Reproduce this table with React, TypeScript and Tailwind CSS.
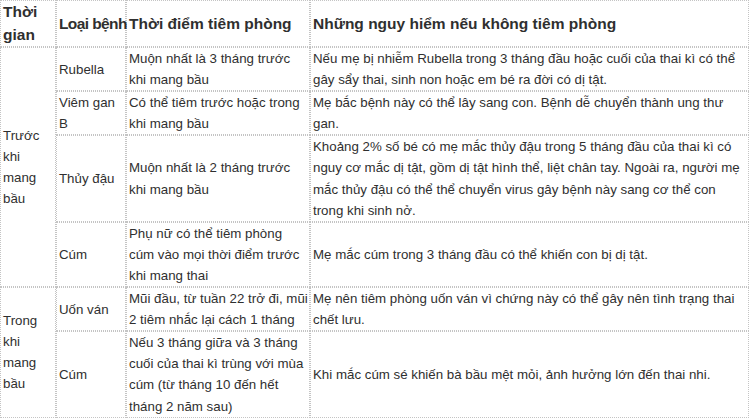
type Row = { time?: { label: string[]; span: number }; disease: string[]; when: string[]; risk: string[] };

// line breaks follow the original article table
const rows: Row[] = [
  {
    time: { label: ["Trước", "khi", "mang", "bầu"], span: 4 },
    disease: ["Rubella"],
    when: ["Muộn nhất là 3 tháng trước", "khi mang bầu"],
    risk: [
      "Nếu mẹ bị nhiễm Rubella trong 3 tháng đầu hoặc cuối của thai kì có thể",
      "gây sẩy thai, sinh non hoặc em bé ra đời có dị tật.",
    ],
  },
  {
    disease: ["Viêm gan", "B"],
    when: ["Có thể tiêm trước hoặc trong", "khi mang bầu"],
    risk: ["Mẹ bắc bệnh này có thể lây sang con. Bệnh dễ chuyển thành ung thư", "gan."],
  },
  {
    disease: ["Thủy đậu"],
    when: ["Muộn nhất là 2 tháng trước", "khi mang bầu"],
    risk: [
      "Khoảng 2% số bé có mẹ mắc thủy đậu trong 5 tháng đầu của thai kì có",
      "nguy cơ mắc dị tật, gồm dị tật hình thể, liệt chân tay. Ngoài ra, người mẹ",
      "mắc thủy đậu có thể thể chuyển virus gây bệnh này sang cơ thể con",
      "trong khi sinh nở.",
    ],
  },
  {
    disease: ["Cúm"],
    when: ["Phụ nữ có thể tiêm phòng", "cúm vào mọi thời điểm trước", "khi mang thai"],
    risk: ["Mẹ mắc cúm trong 3 tháng đầu có thể khiến con bị dị tật."],
  },
  {
    time: { label: ["Trong", "khi", "mang", "bầu"], span: 2 },
    disease: ["Uốn ván"],
    when: ["Mũi đầu, từ tuần 22 trở đi, mũi", "2 tiêm nhắc lại cách 1 tháng"],
    risk: ["Mẹ nên tiêm phòng uốn ván vì chứng này có thể gây nên tình trạng thai", "chết lưu."],
  },
  {
    disease: ["Cúm"],
    when: ["Nếu 3 tháng giữa và 3 tháng", "cuối của thai kì trùng với mùa", "cúm (từ tháng 10 đến hết", "tháng 2 năm sau)"],
    risk: ["Khi mắc cúm sé khiến bà bầu mệt mỏi, ảnh hưởng lớn đến thai nhi."],
  },
];

const cell = "border border-dotted border-[#c4c4c4] px-[2px] py-0 align-middle text-left";

function Lines({ lines }: { lines: string[] }) {
  return (
    <>
      {lines.map((l, i) => (
        <span key={i} className="block whitespace-nowrap">
          {l}
        </span>
      ))}
    </>
  );
}

export default function App() {
  return (
    <div className="w-[750px] h-[419px] overflow-hidden bg-white">
      <table
        className="w-[749px] table-fixed border-separate border-spacing-0 text-[13.3px] leading-[21.1px] text-[#2f2f2f]"
        style={{ fontFamily: '"Liberation Sans", Arial, sans-serif' }}
      >
        <colgroup>
          <col className="w-[56px]" />
          <col className="w-[70px]" />
          <col className="w-[184px]" />
          <col />
        </colgroup>
        <thead>
          <tr>
            <th className={`${cell} text-[15.5px] leading-[22.5px] font-bold`}>
              <Lines lines={["Thời", "gian"]} />
            </th>
            <th className={`${cell} text-[15.5px] font-bold whitespace-nowrap tracking-[-0.6px]`}>Loại bệnh</th>
            <th className={`${cell} text-[15.5px] font-bold`}>Thời điểm tiêm phòng</th>
            <th className={`${cell} text-[15.5px] font-bold`}>Những nguy hiểm nếu không tiêm phòng</th>
          </tr>
        </thead>
        <tbody>
          {rows.map((r, i) => (
            <tr key={i}>
              {r.time && (
                <td rowSpan={r.time.span} className={cell}>
                  <Lines lines={r.time.label} />
                </td>
              )}
              <td className={cell}>
                <Lines lines={r.disease} />
              </td>
              <td className={cell}>
                <Lines lines={r.when} />
              </td>
              <td className={cell}>
                <Lines lines={r.risk} />
              </td>
            </tr>
          ))}
        </tbody>
      </table>
    </div>
  );
}
